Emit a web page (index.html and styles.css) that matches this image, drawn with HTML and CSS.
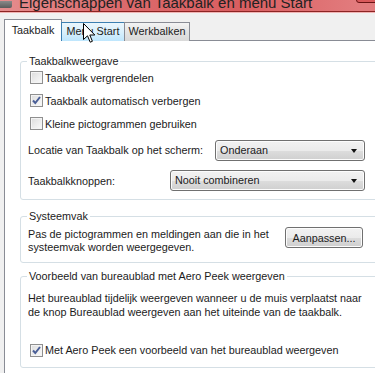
FILE: index.html
```html
<!DOCTYPE html>
<html lang="nl">
<head>
  <meta charset="UTF-8" />
  <meta name="viewport" content="width=device-width, initial-scale=1.0"/>
  <title>Eigenschappen van Taakbalk en menu Start</title>
  <link rel="stylesheet" href="styles.css">
</head>
<body>
  <div class="window">
    <div class="titlebar">
      <span class="app-icon"></span>
      <span class="title">Eigenschappen van Taakbalk en menu Start</span>
      <span class="close-btn"></span>
    </div>

    <div class="dialog">
      <div class="tabs">
        <div class="tab active">Taakbalk</div>
        <div class="tab hover">Menu Start</div>
        <div class="tab">Werkbalken</div>
      </div>

      <div class="panel">
        <fieldset class="group group-taskbar">
          <legend>Taakbalkweergave</legend>
          <div class="options">
            <label class="check-row"><span class="checkbox"></span>Taakbalk vergrendelen</label>
            <label class="check-row"><span class="checkbox checked"></span>Taakbalk automatisch verbergen</label>
            <label class="check-row"><span class="checkbox"></span>Kleine pictogrammen gebruiken</label>
          </div>
          <div class="field-row first">
            <span>Locatie van Taakbalk op het scherm:</span>
            <div class="combo combo-short">Onderaan<span class="arrow"></span></div>
          </div>
          <div class="field-row">
            <span>Taakbalkknoppen:</span>
            <div class="combo combo-long">Nooit combineren<span class="arrow"></span></div>
          </div>
        </fieldset>

        <fieldset class="group group-tray">
          <legend>Systeemvak</legend>
          <div class="tray-row">
            <p class="desc">Pas de pictogrammen en meldingen aan die in het systeemvak worden weergegeven.</p>
            <button class="btn">Aanpassen...</button>
          </div>
        </fieldset>

        <fieldset class="group group-peek">
          <legend>Voorbeeld van bureaublad met Aero Peek weergeven</legend>
          <p class="desc peek-desc">Het bureaublad tijdelijk weergeven wanneer u de muis verplaatst naar de knop Bureaublad weergeven aan het uiteinde van de taakbalk.</p>
          <label class="check-row peek-check"><span class="checkbox checked"></span>Met Aero Peek een voorbeeld van het bureaublad weergeven</label>
        </fieldset>
      </div>
    </div>

    <svg class="cursor" width="13" height="21" viewBox="0 0 13 21">
      <path d="M0.5 0.5 L0.5 16.5 L4.5 12.8 L7.2 19.2 L9.4 18.3 L6.8 12 L11.8 12 Z" fill="#fff" stroke="#000" stroke-width="1" stroke-linejoin="round"/>
    </svg>
  </div>
</body>
</html>
```

FILE: styles.css
```css
* { box-sizing: border-box; margin:0; padding:0; }
html, body { width:375px; height:373px; overflow:hidden; }
body {
  font-family: 'Liberation Sans', Arial, sans-serif;
  font-size:10.8px; color:#1b1b1b;
  background:#f0f0f0;
}
.window {
  position:relative;
  width:400px; height:373px;
  background:#f0f0f0;
  overflow:hidden;
}

/* title bar, mostly cut off */
.titlebar {
  position:relative;
  height:12px; overflow:hidden;
  display:flex; align-items:flex-end;
  background: linear-gradient(90deg, #e58d8e 0%, #dc6a6c 30%, #d95e60 60%, #e27c7e 90%);
  border-bottom:1px solid #8c2424;
  box-shadow:0 1px 0 #f2b5b5;
}
.app-icon {
  width:12px; height:7px; margin:0 7px 3px 0;
  background:linear-gradient(#8a8a8a, #5b5b5b);
  border-radius:0 0 2px 0;
}
.title {
  font-size:15px; line-height:15px; color:#222;
  margin-bottom:1px; white-space:nowrap;
}
.close-btn {
  position:absolute; right:14px; top:-6px;
  width:30px; height:9px;
  border:1px solid #6a1414; border-radius:3px;
  background:#d9595b;
}

.dialog { padding:7px 0 0 4px; }

.tabs {
  display:flex; align-items:flex-end;
  height:22px; margin-bottom:-1px;
  position:relative; z-index:1;
}
.tab {
  height:19px;
  line-height:17px; text-align:center; white-space:nowrap;
  border:1px solid #898c95; border-bottom:none;
  background:linear-gradient(#f3f3f3, #e3e3e3 50%, #d9d9d9);
  margin-left:-1px;
}
.tab.active {
  height:22px; width:58px; margin-left:0;
  line-height:21px;
  background:#fff;
}
.tab.hover {
  width:64px;
  background:linear-gradient(#eaf6fd, #d9f0fc 50%, #bee6fd);
  border-color:#3c7fb1;
}
.tab:last-child { width:66px; }

.panel {
  height:340px;
  background:#fff;
  border:1px solid #898c95;
  padding:13px 15px 0 15px;
}

.group {
  min-width:0;
  border:1px solid #d5dfe5;
  border-radius:3px;
  padding:0 18px 3px 7px;
  box-shadow:inset 0 0 0 1px #fff;
}
.group legend {
  padding:0 2px; margin-left:-1px;
  line-height:14px;
  color:#1b1b1b;
}
.group-tray { margin-top:9px; padding-bottom:8px; }
.group-peek { margin-top:6px; padding-bottom:6px; }

.options { margin-top:-2px; }
.check-row {
  display:flex; align-items:center;
  height:23px; padding-left:2px;
  white-space:nowrap;
}
.checkbox {
  width:13px; height:13px; margin-right:2px;
  border:1px solid #8f8f8f;
  background:linear-gradient(135deg, #dcdcdc, #fbfbfb);
  box-shadow:inset 0 0 0 1px #f4f4f4;
  flex-shrink:0;
}
.checkbox.checked {
  background:
    url("data:image/svg+xml,%3Csvg xmlns='http://www.w3.org/2000/svg' width='11' height='11'%3E%3Cpath d='M2 5.5 L4.3 8 L9 2' fill='none' stroke='%234a5f97' stroke-width='2'/%3E%3C/svg%3E") center/11px 11px no-repeat,
    linear-gradient(135deg, #dcdcdc, #fbfbfb);
}

.field-row {
  display:flex; align-items:center; justify-content:space-between;
  height:31px; white-space:nowrap;
}
.field-row.first { height:30px; }
.combo {
  position:relative;
  height:21px; line-height:19px;
  padding:0 4px;
  border:1px solid #707070; border-radius:3px;
  background:linear-gradient(#f2f2f2, #ebebeb 50%, #dddddd 51%, #cfcfcf);
  box-shadow:inset 0 0 0 1px #fcfcfc;
}
.combo-short { width:150px; }
.combo-long { width:195px; }
.arrow {
  position:absolute; right:7px; top:8px;
  border-left:3.5px solid transparent;
  border-right:3.5px solid transparent;
  border-top:4px solid #111;
}

.desc { line-height:13px; }
.tray-row {
  display:flex; justify-content:space-between; align-items:flex-start;
  padding-top:1px;
}
.tray-row .desc { width:250px; margin-top:4px; }
.btn {
  font:inherit; color:#1b1b1b;
  width:78px; height:21px; margin-top:3px; margin-right:2px;
  border:1px solid #707070; border-radius:3px;
  background:linear-gradient(#f2f2f2, #ebebeb 50%, #dddddd 51%, #cfcfcf);
  box-shadow:inset 0 0 0 1px #fcfcfc;
}

.peek-desc { line-height:14px; margin-top:8px; width:345px; }
.peek-check { margin-top:20px; height:22px; }

.cursor {
  position:absolute; left:83px; top:23px; z-index:5;
}
```
